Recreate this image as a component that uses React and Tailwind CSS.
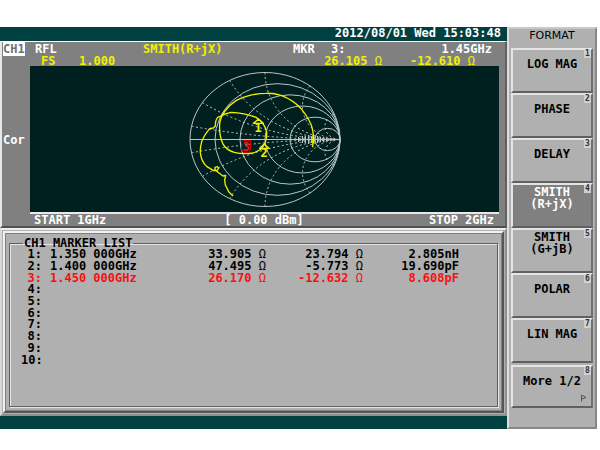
import React from "react";

const markers = [
  { n: 1, freq: "1.350 000GHz", r: "33.905", x: "23.794", eq: "2.805nH" },
  { n: 2, freq: "1.400 000GHz", r: "47.495", x: "-5.773", eq: "19.690pF" },
  { n: 3, freq: "1.450 000GHz", r: "26.170", x: "-12.632", eq: "8.608pF", active: true },
  { n: 4 }, { n: 5 }, { n: 6 }, { n: 7 }, { n: 8 }, { n: 9 }, { n: 10 },
];

const softkeys = [
  ["LOG MAG"],
  ["PHASE"],
  ["DELAY"],
  ["SMITH", "(R+jX)"],
  ["SMITH", "(G+jB)"],
  ["POLAR"],
  ["LIN MAG"],
];

const RX = 75;
const RY = 67;
const CX = 264;
const CY = 139.5;

// Constant-reactance arc, from the rim of the chart to the open-circuit point.
function reactanceArc(x, sign) {
  const u = (x * x - 1) / (x * x + 1);
  const v = (2 * x) / (x * x + 1);
  const sx = CX + u * RX;
  const sy = CY - sign * v * RY;
  return `M${sx} ${sy} A${RX / x} ${RY / x} 0 0 ${sign > 0 ? 0 : 1} ${CX + RX} ${CY}`;
}

function SmithChart() {
  return (
    <svg viewBox="184 66 160 146" width="160" height="146" fill="none" role="img" aria-label="Smith chart">
      <g stroke="#bcc4c4" strokeWidth="1">
        {[0, 0.2, 0.5, 1, 2, 5].map((r) => (
          <ellipse key={r} cx={CX + (r / (1 + r)) * RX} cy={CY} rx={RX / (1 + r)} ry={RY / (1 + r)} />
        ))}
        <path d="M189 139.5H339" />
        <g strokeDasharray="2 2.5">
          {[0.1, 0.3, 0.6, 1, 2, 5].map((x) => (
            <React.Fragment key={x}>
              <path d={reactanceArc(x, 1)} />
              <path d={reactanceArc(x, -1)} />
            </React.Fragment>
          ))}
        </g>
        <path d="M297.500 137v5M301.500 136v7M304.500 136v7M307.500 135v9M310.500 136v7M316.500 136v7M319.500 137v5M322.500 137v5M325.500 138v3" />
      </g>
      <g transform="translate(180 60) scale(.33333)" stroke="#f0f000" strokeWidth="4" strokeLinejoin="round">
        <path d="M395 262L397 225Q395 200 385 183Q375 163 362 148Q338 120 300 106Q278 99 255 100Q205 101 165 122Q145 135 132 153Q117 174 116 192Q114 225 125 250Q135 270 160 277Q185 283 215 279Q238 273 248 257Q258 240 257 215Q250 187 225 172Q190 158 150 157Q132 160 120 168L110 172Q103 180 103 198L97 204L86 206Q68 228 62 245Q57 265 58 278Q61 306 78 320L98 332L110 332M102 332L102 322L109 320L113 325L106 333L119 343L126 348L134 346L131 360L133 375L143 395L156 408" />
        <path d="M397 225V250" strokeWidth="6" />
        <path d="M217 190L232 178L247 190Z" />
        <path d="M236 265L250 252L264 265Z" />
      </g>
      <g fontFamily='"DejaVu Sans Mono", monospace' fontWeight="bold" fontSize="12" textAnchor="middle">
        <text x="257" y="132" fill="#f0f000">1</text>
        <text x="263" y="157" fill="#f0f000">2</text>
        <text x="245" y="151" fill="#f01010">3</text>
      </g>
      <path d="M240.500 149.500V142.500L242.500 140.500H249.500V149.500L247.500 152.500H242.500Z" stroke="#d00000" />
    </svg>
  );
}

function Ohms({ value }) {
  return (
    <span>
      {value} <span className="font-normal">Ω</span>
    </span>
  );
}

function Softkey({ lines, index, active, more }) {
  return (
    <button
      className={`relative flex shrink-0 flex-col items-center border-2 border-t-[#e4e4e4] border-l-[#e4e4e4] border-r-[#707070] border-b-[#606060] text-[12px] leading-3 font-bold ${
        more ? "mt-[2px] h-[43px]" : "h-[45px]"
      } ${lines.length > 1 ? "pt-px" : "pt-2"} ${active ? "bg-[#808080] text-white" : "bg-[#b0b0b0] text-black"}`}
    >
      {lines.map((l) => (
        <span key={l} className="whitespace-nowrap">{l}</span>
      ))}
      <span className="absolute top-0 right-0 h-2 w-[7px] bg-[#d0d0d0] text-center text-[8px] leading-2 text-[#333]">
        {index}
      </span>
      {more && (
        <svg className="absolute right-1 bottom-1" width="7" height="8" viewBox="0 0 7 8" fill="none">
          <path d="M1.500 7.500V1L6 3.500L2 5" stroke="#555" />
        </svg>
      )}
    </button>
  );
}

export default function App() {
  return (
    <div className="min-h-screen bg-white pt-[27px] pr-[3px] font-['DejaVu_Sans_Mono','Liberation_Mono',monospace] text-[12px] leading-3 font-bold whitespace-pre">
      <div className="flex">
        <main className="flex min-w-0 flex-1 flex-col bg-[#004040]">
          <header className="h-[14px] pr-[6px] text-right text-white">2012/08/01 Wed 15:03:48</header>

          <section className="border-t border-r-2 border-b-2 border-l-2 border-t-white border-r-[#606060] border-b-[#505050] border-l-[#e8e8e8] bg-[#808080] pt-px text-white">
            <div className="grid h-3 grid-cols-[32px_108px_150px_38px_1fr] pl-px">
              <h1><span className="bg-white text-[#707070]">CH1</span></h1>
              <span>RFL</span>
              <span className="text-[#f0f000]">SMITH(R+jX)</span>
              <span>MKR</span>
              <span className="flex justify-between pr-[13px]"><span>3:</span><span>1.45GHz</span></span>
            </div>
            <div className="grid h-[11px] grid-cols-[38px_1fr_92px_31px] pl-[39px] text-[#f0f000]">
              <span>FS</span>
              <span>1.000</span>
              <span className="col-span-2 flex justify-end gap-[28px] pr-[30px]"><Ohms value="26.105" /><Ohms value="-12.610" /></span>
            </div>
            <div className="flex pr-[6px]">
              <div className="flex w-7 shrink-0 items-center pl-px">Cor</div>
              <div className="flex flex-1 justify-center border-b-2 border-b-[#e8e8e8] bg-[#002020]">
                <SmithChart />
              </div>
            </div>
            <footer className="grid h-3 grid-cols-3 pr-[11px] pl-8">
              <span>START 1GHz</span>
              <span className="text-center">[ 0.00 dBm]</span>
              <span className="text-right">STOP 2GHz</span>
            </footer>
          </section>

          <section className="border-2 border-t-[#eeeeee] border-r-[#909090] border-b-[#909090] border-l-[#d8d8d8] bg-[#b0b0b0] p-px text-black">
            <div className="border-2 border-t-[#f0f0f0] border-r-[#555] border-b-[#555] border-l-[#f0f0f0]">
              <div className="border border-[#808080] px-[3px] pt-[3px] pb-[3px]">
                <fieldset className="h-[170px] border border-[#606060] pl-[11px] shadow-[inset_1px_1px_0_#e4e4e4,1px_1px_0_#e4e4e4]">
                  <legend className="ml-[2px] px-px">CH1 MARKER LIST</legend>
                  <table className="h-[117px] w-full table-fixed border-collapse leading-[11px]">
                    <colgroup>
                      <col className="w-[21px]" /><col /><col className="w-[97px]" /><col className="w-[97px]" /><col className="w-[96px]" /><col className="w-[38px]" />
                    </colgroup>
                    <tbody>
                      {markers.map((m) => (
                        <tr key={m.n} className={m.active ? "text-[#f81010]" : ""}>
                          <th scope="row" className="p-0 text-right font-bold">{m.n}:</th>
                          <td className="p-0 pl-2">{m.freq}</td>
                          <td className="p-0 text-right">{m.r && <Ohms value={m.r} />}</td>
                          <td className="p-0 text-right">{m.x && <Ohms value={m.x} />}</td>
                          <td className="p-0 text-right">{m.eq}</td>
                          <td className="p-0" />
                        </tr>
                      ))}
                    </tbody>
                  </table>
                </fieldset>
              </div>
            </div>
          </section>
          <div className="h-[13px]" />
        </main>

        <aside className="flex w-[90px] shrink-0 flex-col border-2 border-t-[#c8c8c8] border-r-[#888] border-b-[#888] border-l-[#dedede] bg-[#b0b0b0] pr-[2px] pl-[2px]">
          <h2 className="h-[19px] text-center font-['DejaVu_Sans',sans-serif] text-[11px] leading-[14px] font-normal">FORMAT</h2>
          <nav className="flex flex-col">
            {softkeys.map((lines, i) => (
              <Softkey key={i} lines={lines} index={i + 1} active={i === 3} />
            ))}
            <Softkey lines={["More 1/2"]} index={8} more />
          </nav>
        </aside>
      </div>
    </div>
  );
}
